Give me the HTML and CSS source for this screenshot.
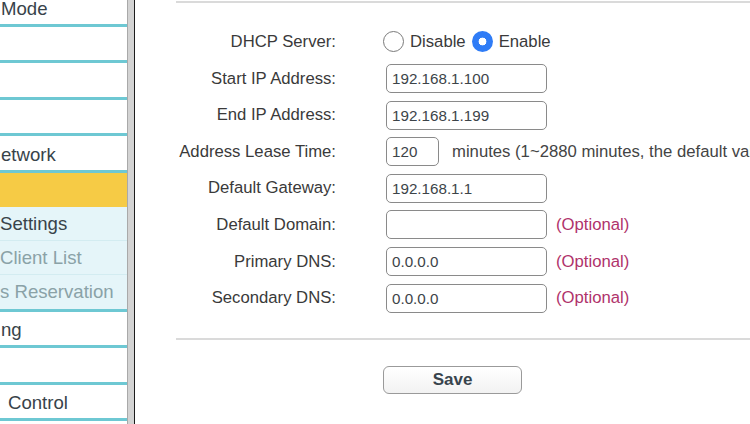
FILE: index.html
```html
<!DOCTYPE html>
<html lang="en">
<head>
<meta charset="utf-8">
<title>DHCP Settings</title>
<link rel="stylesheet" href="styles.css">
</head>
<body>
<div class="page">
  <nav class="sidebar">
    <div class="menu">
      <div class="item">Mode</div>
      <div class="item"></div>
      <div class="item"></div>
      <div class="item"></div>
      <div class="item">etwork</div>
      <div class="item active"></div>
      <div class="sub">
        <div class="subitem current">Settings</div>
        <div class="subitem">Client List</div>
        <div class="subitem">s Reservation</div>
      </div>
      <div class="item">ng</div>
      <div class="item"></div>
      <div class="item indent">Control</div>
      <div class="item"></div>
    </div>
  </nav>
  <div class="divider"></div>
  <main class="main">
    <div class="rule"></div>
    <div class="form">
      <div class="label">DHCP Server:</div>
      <div class="value radios">
        <input type="radio" name="dhcp" class="radio"><span class="rlabel">Disable</span>
        <input type="radio" name="dhcp" class="radio" checked><span class="rlabel">Enable</span>
      </div>

      <div class="label">Start IP Address:</div>
      <div class="value"><input class="field" type="text" value="192.168.1.100"></div>

      <div class="label">End IP Address:</div>
      <div class="value"><input class="field" type="text" value="192.168.1.199"></div>

      <div class="label">Address Lease Time:</div>
      <div class="value"><input class="field short" type="text" value="120"><span class="hint">minutes (1~2880 minutes, the default value is 120)</span></div>

      <div class="label">Default Gateway:</div>
      <div class="value"><input class="field" type="text" value="192.168.1.1"></div>

      <div class="label">Default Domain:</div>
      <div class="value"><input class="field" type="text" value=""><span class="optional">(Optional)</span></div>

      <div class="label">Primary DNS:</div>
      <div class="value"><input class="field" type="text" value="0.0.0.0"><span class="optional">(Optional)</span></div>

      <div class="label">Secondary DNS:</div>
      <div class="value"><input class="field" type="text" value="0.0.0.0"><span class="optional">(Optional)</span></div>
    </div>
    <div class="rule bottom"></div>
    <div class="actions">
      <button class="save" type="button">Save</button>
    </div>
  </main>
</div>
</body>
</html>
```
FILE: styles.css
```css
html, body {
  margin: 0;
  padding: 0;
  background: #fff;
}
body {
  font-family: "Liberation Sans", Arial, Helvetica, sans-serif;
  color: #333;
  overflow: hidden;
}
.page {
  display: flex;
  width: 750px;
  height: 424px;
  overflow: hidden;
}

/* Sidebar */
.sidebar {
  width: 127px;
  flex: 0 0 127px;
  overflow: hidden;
  border-right: 1px solid #a9a9a9;
  background: #fff;
}
.menu {
  margin-top: -10px;
}
.item {
  box-sizing: border-box;
  height: 36.6px;
  padding-top: 1.5px;
  line-height: 33px;
  border-bottom: 3px solid #6ec8d3;
  font-size: 18.6px;
  color: #38434a;
  white-space: nowrap;
  padding-left: 1px;
}
.item.indent {
  padding-left: 8px;
}
.item.active {
  height: 33.6px;
  background: #f6cb45;
  border-bottom: none;
}
.sub {
  background: #e5f5f9;
  border-bottom: 3px solid #6ec8d3;
}
.subitem {
  box-sizing: border-box;
  height: 34px;
  padding-top: 1px;
  line-height: 32px;
  border-bottom: 1px solid #d3ecf1;
  font-size: 18.6px;
  color: #8aa2a7;
  white-space: nowrap;
}
.subitem:last-child {
  border-bottom: none;
}
.subitem.current {
  color: #38434a;
}

.divider {
  flex: 0 0 6px;
  background: #d3d3d3;
  border-right: 1.5px solid #1c1c1c;
}

/* Main */
.main {
  flex: 1;
  min-width: 0;
  overflow: hidden;
  padding-left: 41px;
}
.rule {
  margin-top: 1px;
  height: 2px;
  background: #dadada;
}
.rule.bottom {
  margin-top: 22px;
}
.form {
  margin-top: 20.7px;
  display: grid;
  grid-template-columns: 160px 1fr;
  grid-auto-rows: 36.6px;
  column-gap: 47px;
  align-items: center;
}
.label {
  text-align: right;
  font-size: 16.7px;
  color: #3a3a3a;
  white-space: nowrap;
}
.value {
  display: flex;
  align-items: center;
  white-space: nowrap;
  font-size: 16.7px;
}
.radio {
  appearance: none;
  -webkit-appearance: none;
  width: 21px;
  height: 21px;
  margin: 0 6px 0 0;
  border: 1.6px solid #7a7a7a;
  border-radius: 50%;
  box-sizing: border-box;
  background: #fff;
}
.radio:checked {
  border: none;
  background: radial-gradient(circle, #fff 0 3.6px, #2f7cf6 4.2px);
}
.rlabel {
  color: #3a3a3a;
  margin-right: 6px;
}
.field {
  box-sizing: border-box;
  width: 161px;
  height: 29px;
  margin: 0 0 0 3px;
  padding: 0 5px;
  border: 1px solid #8a8a8a;
  border-radius: 5px;
  font-family: "Liberation Sans", Arial, Helvetica, sans-serif;
  font-size: 15.2px;
  color: #3d4449;
  background: #fff;
  outline: none;
}
.field.short {
  width: 53px;
}
.hint {
  margin-left: 13px;
  color: #444;
}
.optional {
  margin-left: 9px;
  color: #b0336b;
}
.actions {
  margin-top: 26px;
  padding-left: 207px;
}
.save {
  box-sizing: border-box;
  width: 139px;
  height: 28px;
  border: 1px solid #9a9a9a;
  border-radius: 6px;
  background: linear-gradient(#ffffff, #f2f2f2);
  font-family: "Liberation Sans", Arial, Helvetica, sans-serif;
  font-weight: bold;
  font-size: 17px;
  color: #38444d;
  padding: 0;
}
```
